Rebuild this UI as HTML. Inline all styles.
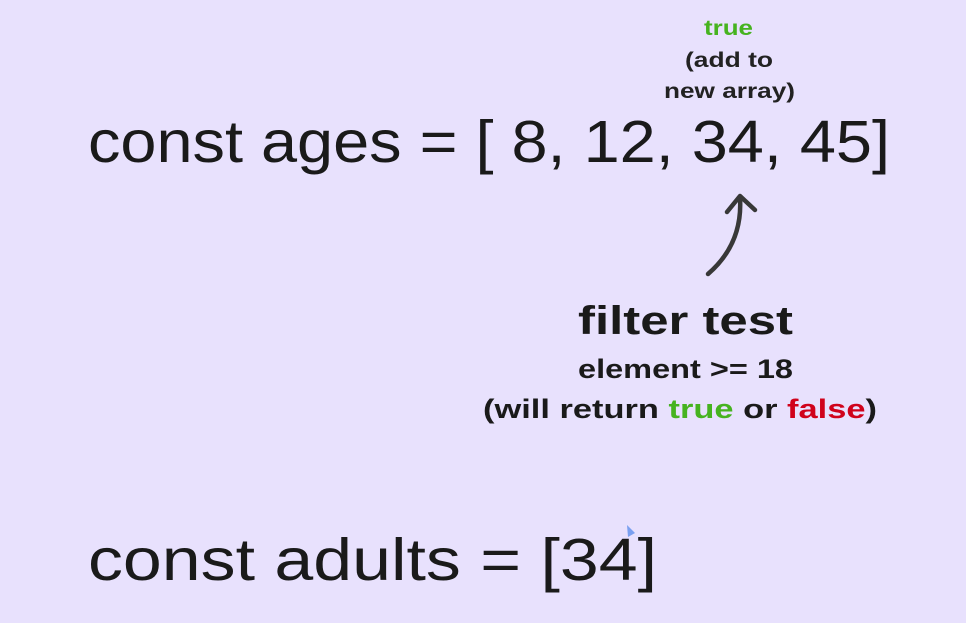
<!DOCTYPE html>
<html><head><meta charset="utf-8"><style>
html,body{margin:0;padding:0;background:#e8e1fd;}
svg{display:block}
text{font-family:"Liberation Sans",sans-serif;fill:#1a1a1a}
</style></head><body>
<svg width="966" height="623" viewBox="0 0 966 623" xmlns="http://www.w3.org/2000/svg">
<rect width="966" height="623" fill="#e8e1fd"/>
<text x="704" y="35" font-size="21" font-weight="bold" style="fill:#46b320" textLength="49" lengthAdjust="spacingAndGlyphs">true</text>
<text x="685" y="67" font-size="21" font-weight="bold" style="fill:#222" textLength="88" lengthAdjust="spacingAndGlyphs">(add to</text>
<text x="664" y="98" font-size="21" font-weight="bold" style="fill:#222" textLength="131" lengthAdjust="spacingAndGlyphs">new array)</text>
<text x="88" y="162" font-size="59" textLength="802" lengthAdjust="spacingAndGlyphs">const ages = [ 8, 12, 34, 45]</text>
<path d="M708 274 C730 255 742 230 740 198" stroke="#383838" stroke-width="4.5" fill="none" stroke-linecap="round"/>
<path d="M727 212 L740 196 L755 210" stroke="#383838" stroke-width="4.5" fill="none" stroke-linecap="round" stroke-linejoin="round"/>
<text x="578" y="334" font-size="40" font-weight="bold" textLength="215" lengthAdjust="spacingAndGlyphs">filter test</text>
<text x="578" y="378" font-size="27" font-weight="bold" textLength="215" lengthAdjust="spacingAndGlyphs">element &gt;= 18</text>
<text x="483" y="418" font-size="27" font-weight="bold" textLength="394" lengthAdjust="spacingAndGlyphs">(will return <tspan style="fill:#46b320">true</tspan> or <tspan style="fill:#d0021b">false</tspan>)</text>
<text x="88" y="580" font-size="59" textLength="569" lengthAdjust="spacingAndGlyphs">const adults = [34]</text>
<path d="M627 525 L635 533 L628 537 Z" fill="#7aa0f0"/>
</svg>
</body></html>
